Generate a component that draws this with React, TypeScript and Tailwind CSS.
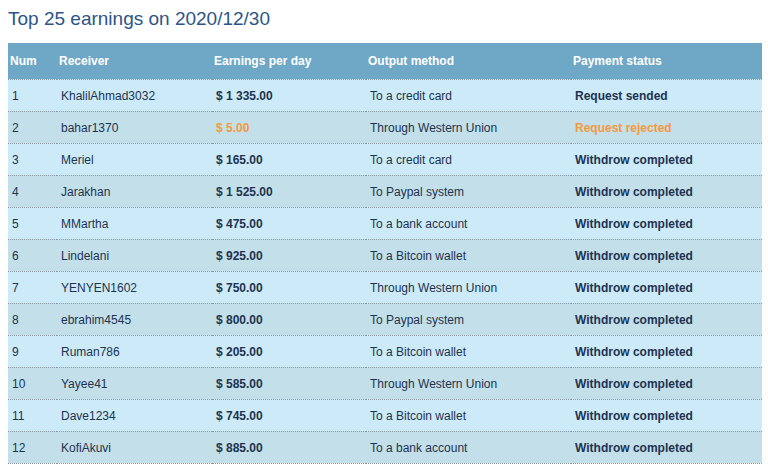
import React from "react";

type Row = { num: number; name: string; amount: string; method: string; status: string; rejected?: boolean };

const rows: Row[] = [
  { num: 1, name: "KhalilAhmad3032", amount: "$ 1 335.00", method: "To a credit card", status: "Request sended" },
  { num: 2, name: "bahar1370", amount: "$ 5.00", method: "Through Western Union", status: "Request rejected", rejected: true },
  { num: 3, name: "Meriel", amount: "$ 165.00", method: "To a credit card", status: "Withdrow completed" },
  { num: 4, name: "Jarakhan", amount: "$ 1 525.00", method: "To Paypal system", status: "Withdrow completed" },
  { num: 5, name: "MMartha", amount: "$ 475.00", method: "To a bank account", status: "Withdrow completed" },
  { num: 6, name: "Lindelani", amount: "$ 925.00", method: "To a Bitcoin wallet", status: "Withdrow completed" },
  { num: 7, name: "YENYEN1602", amount: "$ 750.00", method: "Through Western Union", status: "Withdrow completed" },
  { num: 8, name: "ebrahim4545", amount: "$ 800.00", method: "To Paypal system", status: "Withdrow completed" },
  { num: 9, name: "Ruman786", amount: "$ 205.00", method: "To a Bitcoin wallet", status: "Withdrow completed" },
  { num: 10, name: "Yayee41", amount: "$ 585.00", method: "Through Western Union", status: "Withdrow completed" },
  { num: 11, name: "Dave1234", amount: "$ 745.00", method: "To a Bitcoin wallet", status: "Withdrow completed" },
  { num: 12, name: "KofiAkuvi", amount: "$ 885.00", method: "To a bank account", status: "Withdrow completed" },
];

export default function App() {
  return (
    <div className="bg-white w-[768px] h-[465px] overflow-hidden pl-2 pt-[7px]" style={{ fontFamily: '"Liberation Sans", Arial, sans-serif' }}>
      <h1 className="text-[19px] leading-[24px] text-[#2b5589] font-normal">Top 25 earnings on 2020/12/30</h1>
      <table className="mt-[12px] w-[754px] border-collapse table-fixed text-[12px] text-[#1d3350]">
        <colgroup>
          <col className="w-[49px]" />
          <col className="w-[155px]" />
          <col className="w-[154px]" />
          <col className="w-[205px]" />
          <col className="w-[191px]" />
        </colgroup>
        <thead>
          <tr className="bg-[#6fa7c7] h-[36px] border-b border-dotted border-[#8a9aa5] text-white font-bold text-left">
            <th className="pl-[2px] font-bold">Num</th>
            <th className="pl-[2px] font-bold">Receiver</th>
            <th className="pl-[2px] font-bold">Earnings per day</th>
            <th className="pl-[2px] font-bold">Output method</th>
            <th className="pl-[2px] font-bold">Payment status</th>
          </tr>
        </thead>
        <tbody>
          {rows.map((r, i) => (
            <tr
              key={r.num}
              className={`h-[32px] border-b border-dotted border-[#8a9aa5] ${i % 2 === 0 ? "bg-[#cceaf8]" : "bg-[#c3dfea]"}`}
            >
              <td className={`pl-[4px] pt-[2px] ${r.num === 1 ? "text-[#3d1f4f]" : ""}`}>{r.num}</td>
              <td className="pl-[4px] pt-[2px]">{r.name}</td>
              <td className={`pl-[4px] pt-[2px] font-bold ${r.rejected ? "text-[#f39a3c]" : ""}`}>{r.amount}</td>
              <td className="pl-[4px] pt-[2px]">{r.method}</td>
              <td className={`pl-[4px] pt-[2px] font-bold ${r.rejected ? "text-[#f39a3c]" : ""}`}>{r.status}</td>
            </tr>
          ))}
        </tbody>
      </table>
    </div>
  );
}
